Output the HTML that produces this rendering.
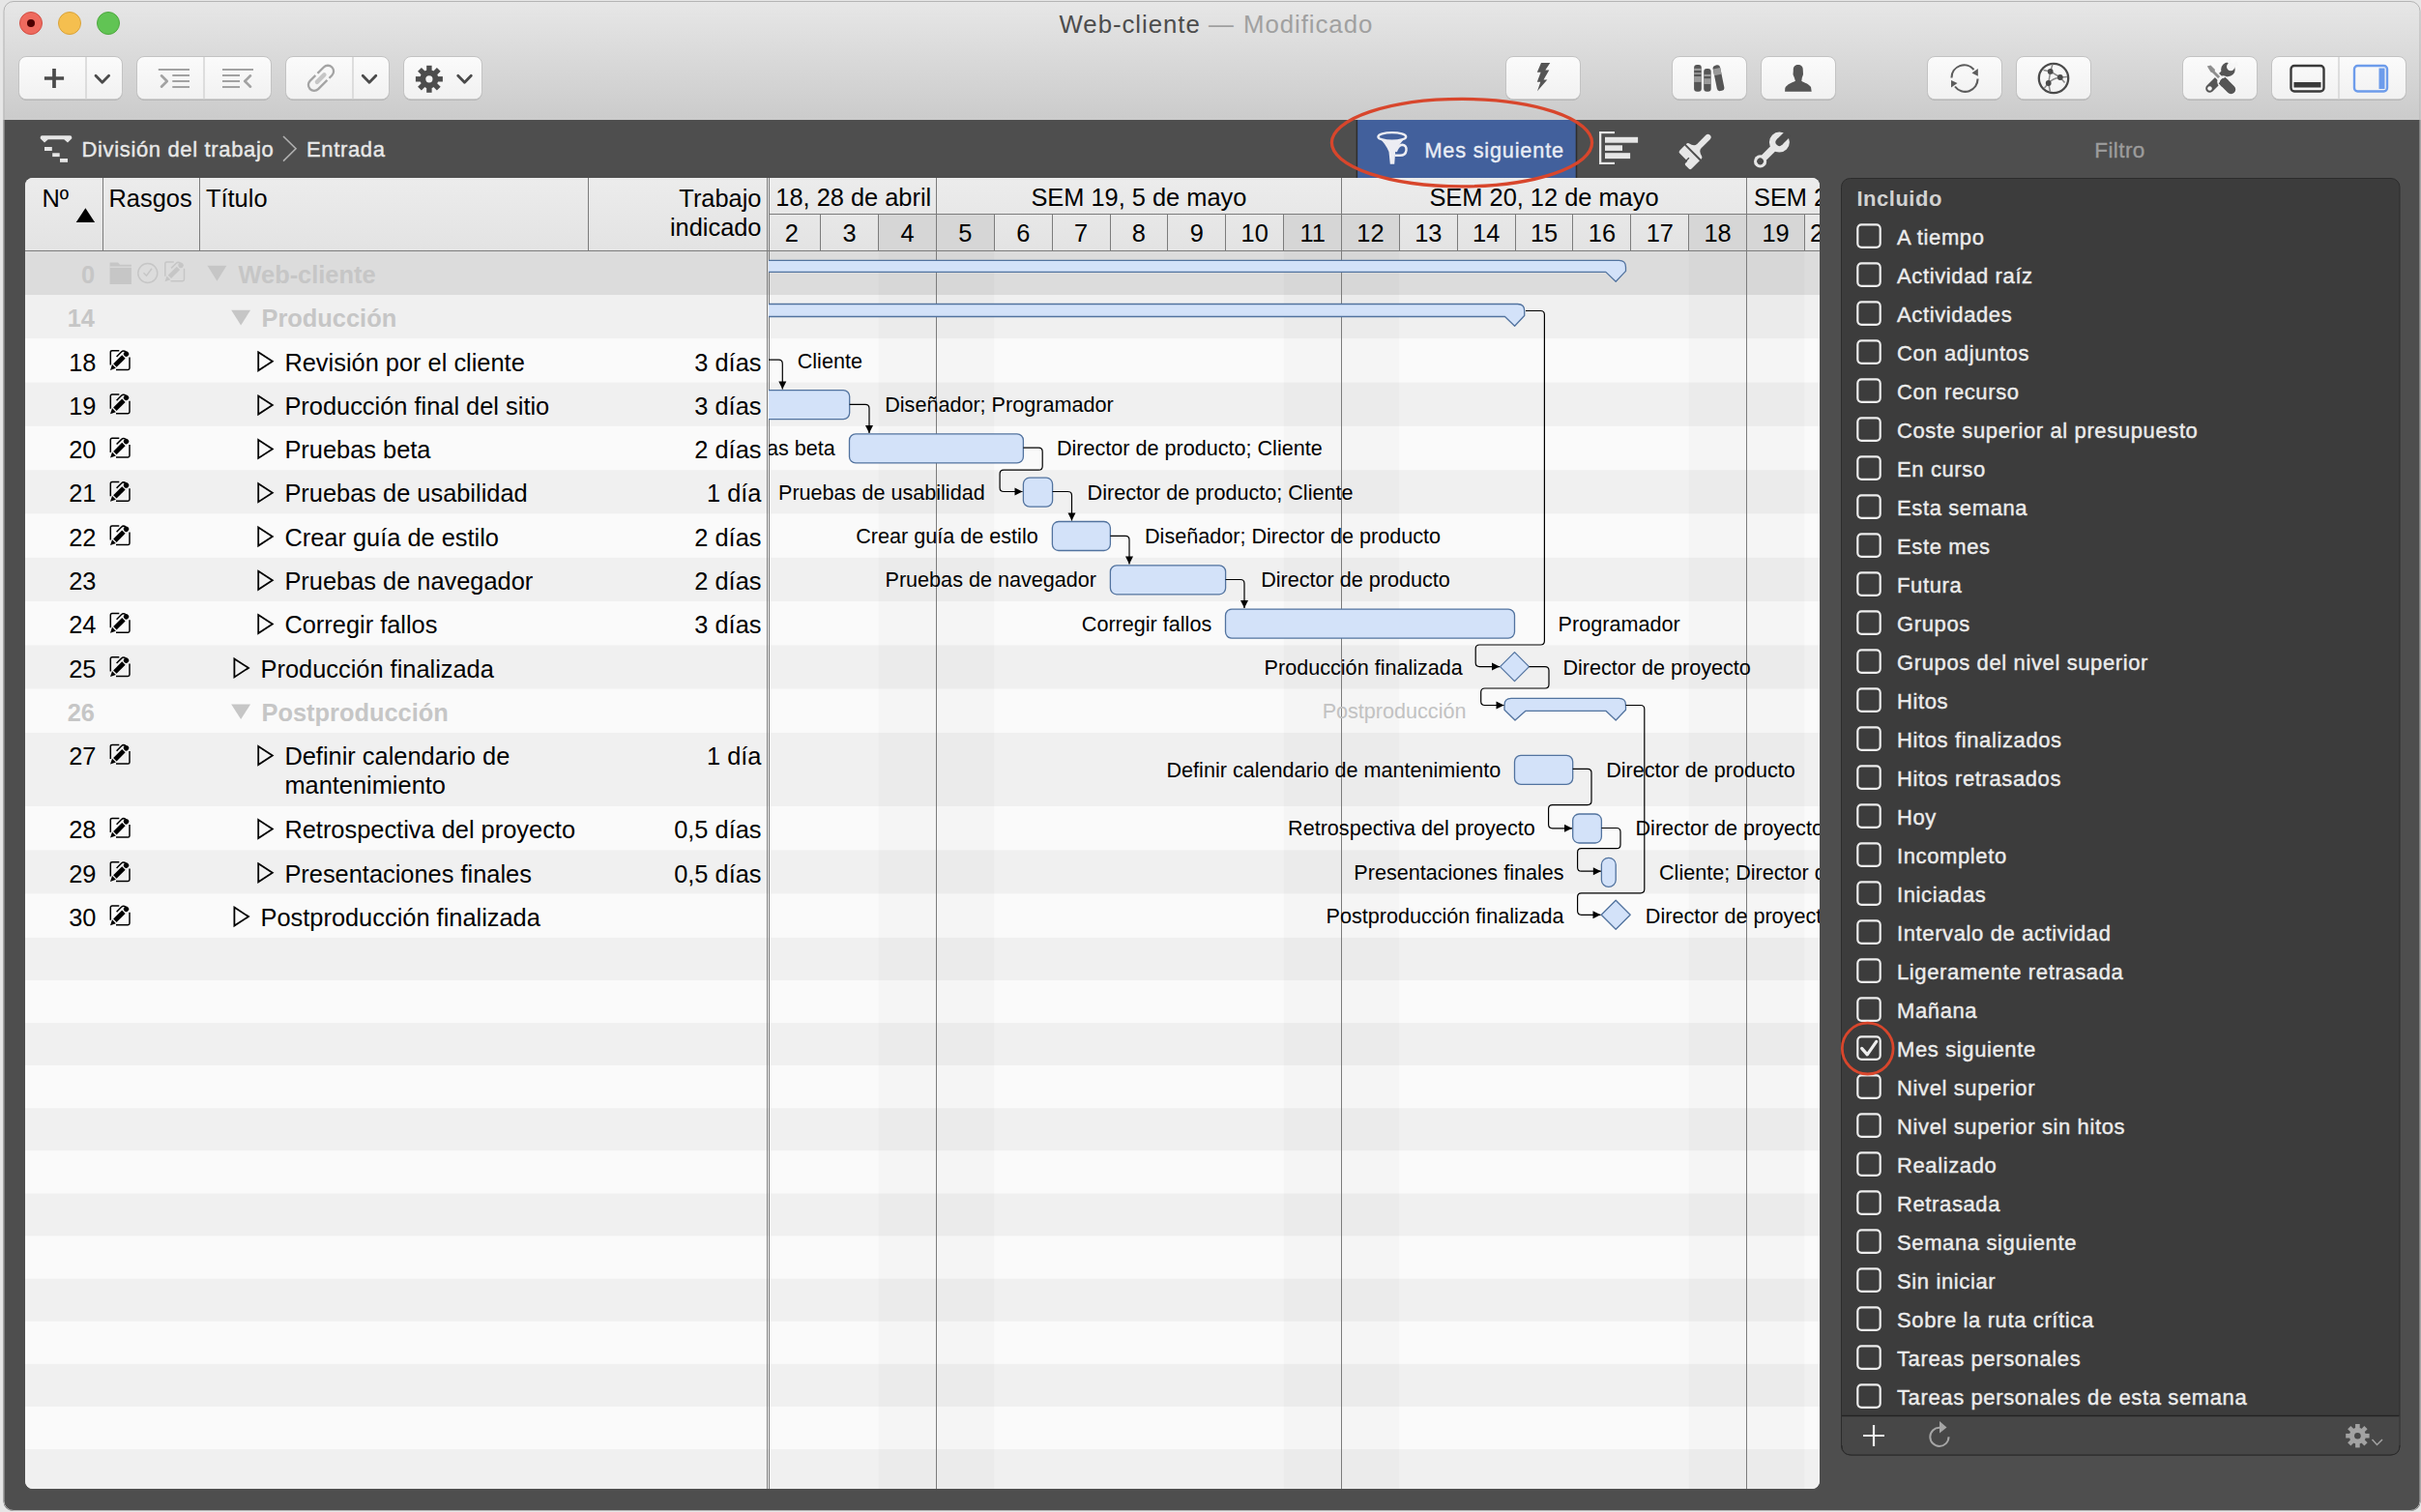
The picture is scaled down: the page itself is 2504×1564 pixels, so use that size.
<!DOCTYPE html>
<html><head><meta charset="utf-8"><title>Web-cliente</title>
<style>
html,body{margin:0;padding:0;background:#e6e6e6;}
body{width:2504px;height:1564px;overflow:hidden;}
svg{display:block;font-family:"Liberation Sans", sans-serif;}
</style></head><body>
<svg width="2504" height="1564" viewBox="0 0 2504 1564">
<defs><linearGradient id="tb" x1="0" y1="0" x2="0" y2="1"><stop offset="0" stop-color="#e7e7e7"/><stop offset="1" stop-color="#cbcbcb"/></linearGradient><linearGradient id="btn" x1="0" y1="0" x2="0" y2="1"><stop offset="0" stop-color="#fbfbfb"/><stop offset="1" stop-color="#f1f1f1"/></linearGradient><linearGradient id="hdr" x1="0" y1="0" x2="0" y2="1"><stop offset="0" stop-color="#ececec"/><stop offset="1" stop-color="#e3e3e3"/></linearGradient><clipPath id="win"><rect x="3.5" y="1" width="2500" height="1562" rx="10" ry="10"/></clipPath><clipPath id="tbl"><rect x="26" y="184" width="1856" height="1356" rx="8" ry="8"/></clipPath><clipPath id="gantt"><rect x="795" y="184" width="1087" height="1356"/></clipPath></defs>
<g clip-path="url(#win)">
<rect x="0.00" y="0.00" width="2504.00" height="124.00" fill="url(#tb)" />
<rect x="0.00" y="124.00" width="2504.00" height="1440.00" fill="#4e4e4e" />
</g>
<rect x="4" y="1.5" width="2499" height="1561" rx="10" ry="10" fill="none" stroke="#b4b4b4" stroke-width="1"/>
<circle cx="32" cy="24" r="11.5" fill="#ee6a5e" stroke="#d24e44" stroke-width="1"/>
<circle cx="72" cy="24" r="11.5" fill="#f5bf4f" stroke="#d9a33a" stroke-width="1"/>
<circle cx="112" cy="24" r="11.5" fill="#61c454" stroke="#4ea83f" stroke-width="1"/>
<circle cx="32" cy="24" r="4" fill="#4d0000"/>
<text x="1095.5" y="33.5" font-size="25.8" fill="#4d4d4d" font-weight="normal" text-anchor="start" letter-spacing="0.95">Web-cliente</text>
<text x="1250.0" y="33.5" font-size="25.8" fill="#a0a0a0" font-weight="normal" text-anchor="start" letter-spacing="0.95">—</text>
<text x="1286.0" y="33.5" font-size="25.8" fill="#a0a0a0" font-weight="normal" text-anchor="start" letter-spacing="0.95">Modificado</text>
<rect x="19.5" y="59.8" width="107.0" height="44" rx="7.5" ry="7.5" fill="#aaaaaa"/>
<rect x="19.5" y="58.5" width="107.0" height="44.3" rx="7.5" ry="7.5" fill="url(#btn)" stroke="#c3c3c3" stroke-width="1"/>
<line x1="89" y1="59" x2="89" y2="102.5" stroke="#d4d4d4" stroke-width="1.5"/>
<rect x="141.5" y="59.8" width="139.0" height="44" rx="7.5" ry="7.5" fill="#aaaaaa"/>
<rect x="141.5" y="58.5" width="139.0" height="44.3" rx="7.5" ry="7.5" fill="url(#btn)" stroke="#c3c3c3" stroke-width="1"/>
<line x1="211" y1="59" x2="211" y2="102.5" stroke="#d4d4d4" stroke-width="1.5"/>
<rect x="295.5" y="59.8" width="107.0" height="44" rx="7.5" ry="7.5" fill="#aaaaaa"/>
<rect x="295.5" y="58.5" width="107.0" height="44.3" rx="7.5" ry="7.5" fill="url(#btn)" stroke="#c3c3c3" stroke-width="1"/>
<line x1="365" y1="59" x2="365" y2="102.5" stroke="#d4d4d4" stroke-width="1.5"/>
<rect x="417.5" y="59.8" width="81.0" height="44" rx="7.5" ry="7.5" fill="#aaaaaa"/>
<rect x="417.5" y="58.5" width="81.0" height="44.3" rx="7.5" ry="7.5" fill="url(#btn)" stroke="#c3c3c3" stroke-width="1"/>
<rect x="1557.5" y="59.8" width="77.0" height="44" rx="7.5" ry="7.5" fill="#aaaaaa"/>
<rect x="1557.5" y="58.5" width="77.0" height="44.3" rx="7.5" ry="7.5" fill="url(#btn)" stroke="#c3c3c3" stroke-width="1"/>
<rect x="1729.5" y="59.8" width="77.0" height="44" rx="7.5" ry="7.5" fill="#aaaaaa"/>
<rect x="1729.5" y="58.5" width="77.0" height="44.3" rx="7.5" ry="7.5" fill="url(#btn)" stroke="#c3c3c3" stroke-width="1"/>
<rect x="1821.5" y="59.8" width="77.0" height="44" rx="7.5" ry="7.5" fill="#aaaaaa"/>
<rect x="1821.5" y="58.5" width="77.0" height="44.3" rx="7.5" ry="7.5" fill="url(#btn)" stroke="#c3c3c3" stroke-width="1"/>
<rect x="1993.5" y="59.8" width="77.0" height="44" rx="7.5" ry="7.5" fill="#aaaaaa"/>
<rect x="1993.5" y="58.5" width="77.0" height="44.3" rx="7.5" ry="7.5" fill="url(#btn)" stroke="#c3c3c3" stroke-width="1"/>
<rect x="2085.5" y="59.8" width="77.0" height="44" rx="7.5" ry="7.5" fill="#aaaaaa"/>
<rect x="2085.5" y="58.5" width="77.0" height="44.3" rx="7.5" ry="7.5" fill="url(#btn)" stroke="#c3c3c3" stroke-width="1"/>
<rect x="2257.5" y="59.8" width="77.0" height="44" rx="7.5" ry="7.5" fill="#aaaaaa"/>
<rect x="2257.5" y="58.5" width="77.0" height="44.3" rx="7.5" ry="7.5" fill="url(#btn)" stroke="#c3c3c3" stroke-width="1"/>
<rect x="2349.5" y="59.8" width="139.0" height="44" rx="7.5" ry="7.5" fill="#aaaaaa"/>
<rect x="2349.5" y="58.5" width="139.0" height="44.3" rx="7.5" ry="7.5" fill="url(#btn)" stroke="#c3c3c3" stroke-width="1"/>
<line x1="2419" y1="59" x2="2419" y2="102.5" stroke="#d4d4d4" stroke-width="1.5"/>
<g fill="none" stroke="#4a4a4a" stroke-width="3.7">
<path d="M45.9 81H66.1M56 71V91"/>
</g>
<path d="M99.0 78.2L105.8 85.2L112.6 78.2" fill="none" stroke="#4a4a4a" stroke-width="2.8" stroke-linecap="round" stroke-linejoin="round"/>
<path d="M375.2 78.2L382 85.2L388.8 78.2" fill="none" stroke="#4a4a4a" stroke-width="2.8" stroke-linecap="round" stroke-linejoin="round"/>
<path d="M473.7 78.2L480.5 85.2L487.3 78.2" fill="none" stroke="#4a4a4a" stroke-width="2.8" stroke-linecap="round" stroke-linejoin="round"/>
<g stroke="#a2a2a2" stroke-width="1.8" fill="none">
<path d="M163.8 72H196M178.3 78H196M178.3 84H196M178.3 90H196"/><path d="M167 78.3L172.8 84L167 89.7" stroke-width="2.6" stroke-linecap="round" stroke-linejoin="round"/>
<path d="M230 72H262M230 78H248M230 84H248M230 90H248"/><path d="M259 78.3L253.2 84L259 89.7" stroke-width="2.6" stroke-linecap="round" stroke-linejoin="round"/>
</g>
<g transform="translate(332 80.8) rotate(-45)"><rect x="-16" y="-6" width="32" height="12" rx="6" fill="none" stroke="#a3a3a3" stroke-width="2.3"/><rect x="-2" y="-8" width="3" height="4" fill="#f7f7f7"/><rect x="3" y="4" width="3" height="4" fill="#f5f5f5"/><rect x="-8" y="-2.2" width="15" height="4.4" rx="2.2" fill="#c6c6c6"/></g>
<rect x="441.20" y="67.80" width="5.40" height="28.00" fill="#4d4d4d" transform="rotate(0 443.9 81.8)"/>
<rect x="441.20" y="67.80" width="5.40" height="28.00" fill="#4d4d4d" transform="rotate(45 443.9 81.8)"/>
<rect x="441.20" y="67.80" width="5.40" height="28.00" fill="#4d4d4d" transform="rotate(90 443.9 81.8)"/>
<rect x="441.20" y="67.80" width="5.40" height="28.00" fill="#4d4d4d" transform="rotate(135 443.9 81.8)"/>
<circle cx="443.9" cy="81.8" r="9.6" fill="#4d4d4d"/>
<circle cx="443.9" cy="81.8" r="3.6" fill="#f6f6f6"/>
<path d="M1594 65L1603.3 65L1598.3 72.6L1602.3 72.6L1596.5 82.6L1600.3 82.6L1590 94.3L1593.3 84.8L1589.8 84.8L1593.6 74.8L1589.8 74.8Z" fill="#555"/>
<rect x="1752.1" y="67.1" width="7.7" height="27.6" rx="3" fill="#555"/>
<g fill="#9a9a9a"><rect x="1752.1" y="70.8" width="7.7" height="2.2"/><rect x="1752.1" y="75.1" width="7.7" height="1.8"/><rect x="1752.1" y="79" width="7.7" height="5.9"/></g>
<rect x="1762.2" y="71.1" width="7.5" height="23.6" rx="3" fill="#555"/>
<g fill="#9a9a9a"><rect x="1762.2" y="76.9" width="7.5" height="2.1"/><rect x="1762.2" y="81.2" width="7.5" height="5.8"/></g>
<g transform="rotate(-11.5 1777.5 80.7)"><rect x="1773.7" y="67.2" width="7.6" height="27" rx="3" fill="#555"/><rect x="1773.7" y="70.5" width="7.6" height="6.8" fill="#9a9a9a"/></g>
<path d="M1859.8 67C1863.5 67 1865 69.5 1864.8 73L1865 77L1863.8 80.6L1863.3 83.8C1866 85.5 1871 87 1873 90L1873.7 94.7H1846.1L1846.3 91C1848.5 87 1853.5 85.5 1856.9 83.8L1855.9 80.6L1854.5 77L1854.8 73C1854.6 69.5 1856 67 1859.8 67Z" fill="#555"/>
<g fill="none" stroke="#5c5c5c" stroke-width="2.1"><path d="M2018.5 80.5A13 13 0 0 1 2041.5 72"/><path d="M2045.5 81.5A13 13 0 0 1 2022 89.5"/></g>
<path d="M2039.5 75.5L2045.8 71L2045.8 78.8Z" fill="#5c5c5c"/><path d="M2024.5 86L2018 90.5L2018 83Z" fill="#5c5c5c"/>
<circle cx="2124" cy="81" r="15.2" fill="none" stroke="#4a4a4a" stroke-width="2.3"/>
<g stroke="#8a8a8a" stroke-width="1.5" fill="none"><path d="M2120.7 73.9L2130.8 80M2130.8 80Q2123 81 2118.7 86M2120.7 73.9L2118.7 86M2120.7 73.9L2113.5 72.5M2120.7 73.9L2123 66.5M2130.8 80L2138 79.5M2130.8 80L2135.5 85.5M2118.7 86L2120.5 95M2118.7 86L2114.5 91"/></g>
<g fill="#4a4a4a"><circle cx="2120.7" cy="73.9" r="2.9"/><circle cx="2130.8" cy="80" r="2.9"/><circle cx="2118.7" cy="86" r="2.9"/></g>
<g transform="translate(2296 81)"><path d="M4 -4L-10.5 10.5" stroke="#555" stroke-width="8.5" stroke-linecap="round"/><circle cx="-10.5" cy="10.5" r="2.3" fill="#f6f6f6"/><circle cx="8.4" cy="-9.1" r="7.3" fill="#555"/><circle cx="11.2" cy="-12" r="4.2" fill="#f6f6f6"/><path d="M11.2 -12L17 -18L19 -13L11.2 -12L6 -19L11 -20Z" fill="#f6f6f6"/><path d="M-9 -9L3 3" stroke="#f6f6f6" stroke-width="6"/><path d="M-9 -9L3 3" stroke="#8e8e8e" stroke-width="2.8"/><path d="M-13.2 -12.6L-9.5 -13.5L-5 -9L-6 -5.5L-9.5 -6.5Z" fill="#8e8e8e"/><path d="M3.5 3.5L11.5 11.5" stroke="#f6f6f6" stroke-width="12.5" stroke-linecap="round"/><path d="M4.5 4.5L11.5 11.5" stroke="#555" stroke-width="9.5" stroke-linecap="round"/><path d="M2 2L5.5 5.5" stroke="#555" stroke-width="9.5"/></g>
<rect x="2369.5" y="68" width="34" height="26.5" rx="3.5" fill="none" stroke="#3a3a3a" stroke-width="2.4"/>
<rect x="2372.5" y="85" width="28" height="5.5" fill="#3a3a3a"/>
<rect x="2435" y="68" width="34" height="26.5" rx="3.5" fill="none" stroke="#6d9ceb" stroke-width="2.4"/>
<rect x="2460.5" y="70.5" width="6" height="21.5" fill="#6d9ceb"/>
<g fill="#e6e6e6"><path d="M43.5 140.3H72.5Q74.3 140.3 74.3 142V143.3L70 147.6L66.2 144.3H49.8L46 147.6L41.7 143.3V142Q41.7 140.3 43.5 140.3Z"/><rect x="46" y="152" width="7.8" height="4"/><rect x="54.2" y="158.3" width="7.5" height="3.8"/><rect x="62" y="164" width="8" height="3.8"/></g>
<text x="84.5" y="162.0" font-size="22" fill="#e8e8e8" font-weight="normal" text-anchor="start" letter-spacing="0.65" stroke="#e8e8e8" stroke-width="0.4">División del trabajo</text>
<path d="M293 141L306 153.8L293 166.6" fill="none" stroke="#b0b0b0" stroke-width="1.6"/>
<text x="317.0" y="162.0" font-size="22" fill="#e8e8e8" font-weight="normal" text-anchor="start" letter-spacing="0.65" stroke="#e8e8e8" stroke-width="0.4">Entrada</text>
<rect x="1403.40" y="124.00" width="226.50" height="60.00" fill="#42609c" />
<line x1="1403.4" y1="124" x2="1403.4" y2="184" stroke="#2e2e2e" stroke-width="1.5"/><line x1="1630.5" y1="124" x2="1630.5" y2="184" stroke="#2e2e2e" stroke-width="1.5"/>
<path d="M1425.4 141.4Q1433.5 149 1436.5 157L1437.8 169.8H1442.2L1443.2 157Q1446 150.5 1454.2 141.4A14.4 4.3 0 0 1 1425.4 141.4Z" fill="#ecedf3"/>
<g fill="none" stroke="#ecedf3" stroke-width="2.4"><ellipse cx="1439.8" cy="141.4" rx="14.4" ry="4.3"/><path d="M1443.8 157Q1446 150 1450.5 149.8Q1455 150.5 1454.5 155.5Q1453.8 160.8 1448 160.8H1442.8"/></g>
<text x="1473.4" y="162.7" font-size="21.7" fill="#e9edf5" font-weight="normal" text-anchor="start" letter-spacing="0.82" stroke="#e9edf5" stroke-width="0.4">Mes siguiente</text>
<g fill="#e6e6e6"><rect x="1654" y="136" width="2.3" height="34"/><rect x="1654" y="136" width="16" height="2.2"/><rect x="1654" y="167.8" width="16" height="2.2"/><rect x="1660" y="141.8" width="34.1" height="5.9"/><rect x="1660" y="150.3" width="18" height="5.6"/><rect x="1660" y="158.2" width="26.1" height="5.9"/></g>
<g transform="translate(1751 157.5) rotate(45)" fill="#e6e6e6"><rect x="-3.1" y="-25" width="6.2" height="18" rx="3.1"/><path d="M-3.1 -9Q-3.1 -5 -9.5 -3.5Q-11 -3 -11 -1.5V-0.8H11V-1.5Q11 -3 9.5 -3.5Q3.1 -5 3.1 -9Z"/><path d="M-11 1.2H11V13Q11 15 9 15H4Q2.5 15 2.5 13.5V10.5H-9Q-11 10.5 -11 8.5Z"/><path d="M1.2 7V15" stroke="#4c4c4c" stroke-width="1.3"/></g>
<g transform="translate(1830.5 157) rotate(45)"><rect x="-3.6" y="-8" width="7.2" height="20" fill="#e6e6e6"/><circle cx="0" cy="14" r="6.6" fill="#e6e6e6"/><circle cx="0" cy="14" r="3.4" fill="#4c4c4c"/><circle cx="0" cy="-14" r="10.5" fill="#e6e6e6"/><rect x="-3.9" y="-27" width="7.8" height="13" fill="#4c4c4c"/><circle cx="0" cy="-14" r="3.9" fill="#4c4c4c"/></g>
<text x="2192.5" y="163.3" font-size="22.5" fill="#9c9c9c" font-weight="normal" text-anchor="middle" letter-spacing="0.4" stroke="#9c9c9c" stroke-width="0.35">Filtro</text>
<g clip-path="url(#tbl)">
<rect x="26.00" y="184.00" width="1856.00" height="1356.00" fill="#fafafa" />
<rect x="26.00" y="184.00" width="1856.00" height="75.50" fill="url(#hdr)" />
<rect x="26.00" y="259.70" width="1856.00" height="45.30" fill="#dcdcdc" />
<rect x="26.00" y="305.00" width="1856.00" height="45.30" fill="#f0f0f0" />
<rect x="26.00" y="350.30" width="1856.00" height="45.30" fill="#fafafa" />
<rect x="26.00" y="395.60" width="1856.00" height="45.30" fill="#f0f0f0" />
<rect x="26.00" y="440.90" width="1856.00" height="45.30" fill="#fafafa" />
<rect x="26.00" y="486.20" width="1856.00" height="45.30" fill="#f0f0f0" />
<rect x="26.00" y="531.50" width="1856.00" height="45.30" fill="#fafafa" />
<rect x="26.00" y="576.80" width="1856.00" height="45.30" fill="#f0f0f0" />
<rect x="26.00" y="622.10" width="1856.00" height="45.30" fill="#fafafa" />
<rect x="26.00" y="667.40" width="1856.00" height="45.30" fill="#f0f0f0" />
<rect x="26.00" y="712.70" width="1856.00" height="45.30" fill="#fafafa" />
<rect x="26.00" y="758.00" width="1856.00" height="76.00" fill="#f0f0f0" />
<rect x="26.00" y="834.00" width="1856.00" height="45.30" fill="#fafafa" />
<rect x="26.00" y="879.30" width="1856.00" height="45.30" fill="#f0f0f0" />
<rect x="26.00" y="924.60" width="1856.00" height="45.30" fill="#fafafa" />
<rect x="26.00" y="969.90" width="1856.00" height="44.10" fill="#f0f0f0" />
<rect x="26.00" y="1014.00" width="1856.00" height="44.10" fill="#fafafa" />
<rect x="26.00" y="1058.10" width="1856.00" height="44.10" fill="#f0f0f0" />
<rect x="26.00" y="1102.20" width="1856.00" height="44.10" fill="#fafafa" />
<rect x="26.00" y="1146.30" width="1856.00" height="44.10" fill="#f0f0f0" />
<rect x="26.00" y="1190.40" width="1856.00" height="44.10" fill="#fafafa" />
<rect x="26.00" y="1234.50" width="1856.00" height="44.10" fill="#f0f0f0" />
<rect x="26.00" y="1278.60" width="1856.00" height="44.10" fill="#fafafa" />
<rect x="26.00" y="1322.70" width="1856.00" height="44.10" fill="#f0f0f0" />
<rect x="26.00" y="1366.80" width="1856.00" height="44.10" fill="#fafafa" />
<rect x="26.00" y="1410.90" width="1856.00" height="44.10" fill="#f0f0f0" />
<rect x="26.00" y="1455.00" width="1856.00" height="44.10" fill="#fafafa" />
<rect x="26.00" y="1499.10" width="1856.00" height="44.10" fill="#f0f0f0" />
<rect x="908.53" y="259.00" width="119.74" height="1281.00" fill="rgba(0,0,0,0.02)" />
<rect x="1327.62" y="259.00" width="119.74" height="1281.00" fill="rgba(0,0,0,0.02)" />
<rect x="1746.71" y="259.00" width="119.74" height="1281.00" fill="rgba(0,0,0,0.02)" />
<rect x="908.53" y="221.50" width="119.74" height="37.50" fill="#d6d6d6" />
<rect x="1327.62" y="221.50" width="119.74" height="37.50" fill="#d6d6d6" />
<rect x="1746.71" y="221.50" width="119.74" height="37.50" fill="#d6d6d6" />
<g stroke="#7c7c7c" stroke-width="1">
<path d="M26 259.5H1882"/>
<path d="M106.5 184V259M206.5 184V259M608.5 184V259M793.5 184V1540M795.5 184V1540"/>
<path d="M795 221.5H1882"/>
<path d="M848.5 221.5V259"/>
<path d="M908.5 221.5V259"/>
<path d="M968.5 184V1540"/>
<path d="M1028.5 221.5V259"/>
<path d="M1088.5 221.5V259"/>
<path d="M1148.5 221.5V259"/>
<path d="M1207.5 221.5V259"/>
<path d="M1267.5 221.5V259"/>
<path d="M1327.5 221.5V259"/>
<path d="M1387.5 184V1540"/>
<path d="M1447.5 221.5V259"/>
<path d="M1507.5 221.5V259"/>
<path d="M1567.5 221.5V259"/>
<path d="M1626.5 221.5V259"/>
<path d="M1686.5 221.5V259"/>
<path d="M1746.5 221.5V259"/>
<path d="M1806.5 184V1540"/>
<path d="M1866.5 221.5V259"/>
</g>
<text x="43.4" y="214.0" font-size="25.4" fill="#000" font-weight="normal" text-anchor="start" >Nº</text>
<path d="M78.7 230.1L88.4 215.3L98.1 230.1Z" fill="#000"/>
<text x="112.5" y="214.0" font-size="25.4" fill="#000" font-weight="normal" text-anchor="start" >Rasgos</text>
<text x="213.0" y="214.0" font-size="25.4" fill="#000" font-weight="normal" text-anchor="start" >Título</text>
<text x="787.5" y="214.0" font-size="25.4" fill="#000" font-weight="normal" text-anchor="end" >Trabajo</text>
<text x="787.5" y="244.2" font-size="25.4" fill="#000" font-weight="normal" text-anchor="end" >indicado</text>
<text x="802.3" y="212.9" font-size="25.4" fill="#000" font-weight="normal" text-anchor="start" >18, 28 de abril</text>
<text x="1177.9" y="212.9" font-size="25.4" fill="#000" font-weight="normal" text-anchor="middle" >SEM 19, 5 de mayo</text>
<text x="1597.0" y="212.9" font-size="25.4" fill="#000" font-weight="normal" text-anchor="middle" >SEM 20, 12 de mayo</text>
<text x="1814.0" y="212.9" font-size="25.4" fill="#000" font-weight="normal" text-anchor="start" >SEM 21, 19 de mayo</text>
<text x="818.7" y="249.8" font-size="25.4" fill="#000" font-weight="normal" text-anchor="middle" >2</text>
<text x="878.6" y="249.8" font-size="25.4" fill="#000" font-weight="normal" text-anchor="middle" >3</text>
<text x="938.5" y="249.8" font-size="25.4" fill="#000" font-weight="normal" text-anchor="middle" >4</text>
<text x="998.3" y="249.8" font-size="25.4" fill="#000" font-weight="normal" text-anchor="middle" >5</text>
<text x="1058.2" y="249.8" font-size="25.4" fill="#000" font-weight="normal" text-anchor="middle" >6</text>
<text x="1118.1" y="249.8" font-size="25.4" fill="#000" font-weight="normal" text-anchor="middle" >7</text>
<text x="1177.9" y="249.8" font-size="25.4" fill="#000" font-weight="normal" text-anchor="middle" >8</text>
<text x="1237.8" y="249.8" font-size="25.4" fill="#000" font-weight="normal" text-anchor="middle" >9</text>
<text x="1297.7" y="249.8" font-size="25.4" fill="#000" font-weight="normal" text-anchor="middle" >10</text>
<text x="1357.6" y="249.8" font-size="25.4" fill="#000" font-weight="normal" text-anchor="middle" >11</text>
<text x="1417.4" y="249.8" font-size="25.4" fill="#000" font-weight="normal" text-anchor="middle" >12</text>
<text x="1477.3" y="249.8" font-size="25.4" fill="#000" font-weight="normal" text-anchor="middle" >13</text>
<text x="1537.2" y="249.8" font-size="25.4" fill="#000" font-weight="normal" text-anchor="middle" >14</text>
<text x="1597.0" y="249.8" font-size="25.4" fill="#000" font-weight="normal" text-anchor="middle" >15</text>
<text x="1656.9" y="249.8" font-size="25.4" fill="#000" font-weight="normal" text-anchor="middle" >16</text>
<text x="1716.8" y="249.8" font-size="25.4" fill="#000" font-weight="normal" text-anchor="middle" >17</text>
<text x="1776.6" y="249.8" font-size="25.4" fill="#000" font-weight="normal" text-anchor="middle" >18</text>
<text x="1836.5" y="249.8" font-size="25.4" fill="#000" font-weight="normal" text-anchor="middle" >19</text>
<text x="1872.0" y="249.8" font-size="25.4" fill="#000" font-weight="normal" text-anchor="start" >20</text>
<text x="98.0" y="292.9" font-size="25.4" fill="#c6c6c6" font-weight="bold" text-anchor="end" >0</text>
<g fill="#c6c6c6"><path d="M113.6 271.4H122L124 273.7H135.9V294.0H113.6Z"/></g>
<path d="M113.6 276.2H135.9" stroke="#dcdcdc" stroke-width="1.2"/>
<circle cx="152.8" cy="282.5" r="10" fill="none" stroke="#c6c6c6" stroke-width="1.5"/>
<path d="M148.5 282.2L151.5 285.2L157 277.7" fill="none" stroke="#c6c6c6" stroke-width="1.5"/>
<g transform="translate(170 270.3)"><path d="M0.8 15.5V2.5Q0.8 0.8 2.5 0.8H9.8M20.5 7.5V18.8Q20.5 20.5 18.8 20.5H6.5" fill="none" stroke="#c6c6c6" stroke-width="1.5"/><g transform="translate(0.5 21) rotate(-45)"><path d="M0 0L5.6 -2.7V2.7Z" fill="#c6c6c6"/><rect x="6.9" y="-2.4" width="12.8" height="4.8" fill="#c6c6c6"/><circle cx="23.6" cy="-0.2" r="2.7" fill="#c6c6c6"/><path d="M14.5 -5.2H21.5Q24.5 -5.2 24.8 -2" fill="none" stroke="#c6c6c6" stroke-width="1.5"/></g></g>
<path d="M214.5 274.7H234.4L224.45 290.7Z" fill="#c6c6c6"/>
<text x="246.5" y="292.9" font-size="25.4" fill="#c6c6c6" font-weight="bold" text-anchor="start" >Web-cliente</text>
<text x="98.0" y="338.2" font-size="25.4" fill="#c6c6c6" font-weight="bold" text-anchor="end" >14</text>
<path d="M239.2 320.8H259.1L249.15 336.4Z" fill="#c6c6c6"/>
<text x="270.5" y="338.2" font-size="25.4" fill="#c6c6c6" font-weight="bold" text-anchor="start" >Producción</text>
<text x="99.5" y="383.5" font-size="25.4" fill="#000" font-weight="normal" text-anchor="end" >18</text>
<g transform="translate(113.5 361.90000000000003)"><path d="M0.8 15.5V2.5Q0.8 0.8 2.5 0.8H9.8M20.5 7.5V18.8Q20.5 20.5 18.8 20.5H6.5" fill="none" stroke="#000" stroke-width="1.5"/><g transform="translate(0.5 21) rotate(-45)"><path d="M0 0L5.6 -2.7V2.7Z" fill="#000"/><rect x="6.9" y="-2.4" width="12.8" height="4.8" fill="#000"/><circle cx="23.6" cy="-0.2" r="2.7" fill="#000"/><path d="M14.5 -5.2H21.5Q24.5 -5.2 24.8 -2" fill="none" stroke="#000" stroke-width="1.5"/></g></g>
<path d="M267.2 364.3L281.8 373.8L267.2 383.3Z" fill="none" stroke="#000" stroke-width="1.8" stroke-linejoin="miter"/>
<text x="294.4" y="383.5" font-size="25.4" fill="#000" font-weight="normal" text-anchor="start" >Revisión por el cliente</text>
<text x="787.5" y="383.5" font-size="25.4" fill="#000" font-weight="normal" text-anchor="end" >3 días</text>
<text x="99.5" y="428.8" font-size="25.4" fill="#000" font-weight="normal" text-anchor="end" >19</text>
<g transform="translate(113.5 407.20000000000005)"><path d="M0.8 15.5V2.5Q0.8 0.8 2.5 0.8H9.8M20.5 7.5V18.8Q20.5 20.5 18.8 20.5H6.5" fill="none" stroke="#000" stroke-width="1.5"/><g transform="translate(0.5 21) rotate(-45)"><path d="M0 0L5.6 -2.7V2.7Z" fill="#000"/><rect x="6.9" y="-2.4" width="12.8" height="4.8" fill="#000"/><circle cx="23.6" cy="-0.2" r="2.7" fill="#000"/><path d="M14.5 -5.2H21.5Q24.5 -5.2 24.8 -2" fill="none" stroke="#000" stroke-width="1.5"/></g></g>
<path d="M267.2 409.6L281.8 419.1L267.2 428.6Z" fill="none" stroke="#000" stroke-width="1.8" stroke-linejoin="miter"/>
<text x="294.4" y="428.8" font-size="25.4" fill="#000" font-weight="normal" text-anchor="start" >Producción final del sitio</text>
<text x="787.5" y="428.8" font-size="25.4" fill="#000" font-weight="normal" text-anchor="end" >3 días</text>
<text x="99.5" y="474.1" font-size="25.4" fill="#000" font-weight="normal" text-anchor="end" >20</text>
<g transform="translate(113.5 452.50000000000006)"><path d="M0.8 15.5V2.5Q0.8 0.8 2.5 0.8H9.8M20.5 7.5V18.8Q20.5 20.5 18.8 20.5H6.5" fill="none" stroke="#000" stroke-width="1.5"/><g transform="translate(0.5 21) rotate(-45)"><path d="M0 0L5.6 -2.7V2.7Z" fill="#000"/><rect x="6.9" y="-2.4" width="12.8" height="4.8" fill="#000"/><circle cx="23.6" cy="-0.2" r="2.7" fill="#000"/><path d="M14.5 -5.2H21.5Q24.5 -5.2 24.8 -2" fill="none" stroke="#000" stroke-width="1.5"/></g></g>
<path d="M267.2 454.90000000000003L281.8 464.40000000000003L267.2 473.90000000000003Z" fill="none" stroke="#000" stroke-width="1.8" stroke-linejoin="miter"/>
<text x="294.4" y="474.1" font-size="25.4" fill="#000" font-weight="normal" text-anchor="start" >Pruebas beta</text>
<text x="787.5" y="474.1" font-size="25.4" fill="#000" font-weight="normal" text-anchor="end" >2 días</text>
<text x="99.5" y="519.4" font-size="25.4" fill="#000" font-weight="normal" text-anchor="end" >21</text>
<g transform="translate(113.5 497.80000000000007)"><path d="M0.8 15.5V2.5Q0.8 0.8 2.5 0.8H9.8M20.5 7.5V18.8Q20.5 20.5 18.8 20.5H6.5" fill="none" stroke="#000" stroke-width="1.5"/><g transform="translate(0.5 21) rotate(-45)"><path d="M0 0L5.6 -2.7V2.7Z" fill="#000"/><rect x="6.9" y="-2.4" width="12.8" height="4.8" fill="#000"/><circle cx="23.6" cy="-0.2" r="2.7" fill="#000"/><path d="M14.5 -5.2H21.5Q24.5 -5.2 24.8 -2" fill="none" stroke="#000" stroke-width="1.5"/></g></g>
<path d="M267.2 500.20000000000005L281.8 509.70000000000005L267.2 519.2Z" fill="none" stroke="#000" stroke-width="1.8" stroke-linejoin="miter"/>
<text x="294.4" y="519.4" font-size="25.4" fill="#000" font-weight="normal" text-anchor="start" >Pruebas de usabilidad</text>
<text x="787.5" y="519.4" font-size="25.4" fill="#000" font-weight="normal" text-anchor="end" >1 día</text>
<text x="99.5" y="564.7" font-size="25.4" fill="#000" font-weight="normal" text-anchor="end" >22</text>
<g transform="translate(113.5 543.1)"><path d="M0.8 15.5V2.5Q0.8 0.8 2.5 0.8H9.8M20.5 7.5V18.8Q20.5 20.5 18.8 20.5H6.5" fill="none" stroke="#000" stroke-width="1.5"/><g transform="translate(0.5 21) rotate(-45)"><path d="M0 0L5.6 -2.7V2.7Z" fill="#000"/><rect x="6.9" y="-2.4" width="12.8" height="4.8" fill="#000"/><circle cx="23.6" cy="-0.2" r="2.7" fill="#000"/><path d="M14.5 -5.2H21.5Q24.5 -5.2 24.8 -2" fill="none" stroke="#000" stroke-width="1.5"/></g></g>
<path d="M267.2 545.5L281.8 555.0L267.2 564.5Z" fill="none" stroke="#000" stroke-width="1.8" stroke-linejoin="miter"/>
<text x="294.4" y="564.7" font-size="25.4" fill="#000" font-weight="normal" text-anchor="start" >Crear guía de estilo</text>
<text x="787.5" y="564.7" font-size="25.4" fill="#000" font-weight="normal" text-anchor="end" >2 días</text>
<text x="99.5" y="610.0" font-size="25.4" fill="#000" font-weight="normal" text-anchor="end" >23</text>
<path d="M267.2 590.8L281.8 600.3L267.2 609.8Z" fill="none" stroke="#000" stroke-width="1.8" stroke-linejoin="miter"/>
<text x="294.4" y="610.0" font-size="25.4" fill="#000" font-weight="normal" text-anchor="start" >Pruebas de navegador</text>
<text x="787.5" y="610.0" font-size="25.4" fill="#000" font-weight="normal" text-anchor="end" >2 días</text>
<text x="99.5" y="655.3" font-size="25.4" fill="#000" font-weight="normal" text-anchor="end" >24</text>
<g transform="translate(113.5 633.6999999999999)"><path d="M0.8 15.5V2.5Q0.8 0.8 2.5 0.8H9.8M20.5 7.5V18.8Q20.5 20.5 18.8 20.5H6.5" fill="none" stroke="#000" stroke-width="1.5"/><g transform="translate(0.5 21) rotate(-45)"><path d="M0 0L5.6 -2.7V2.7Z" fill="#000"/><rect x="6.9" y="-2.4" width="12.8" height="4.8" fill="#000"/><circle cx="23.6" cy="-0.2" r="2.7" fill="#000"/><path d="M14.5 -5.2H21.5Q24.5 -5.2 24.8 -2" fill="none" stroke="#000" stroke-width="1.5"/></g></g>
<path d="M267.2 636.0999999999999L281.8 645.5999999999999L267.2 655.0999999999999Z" fill="none" stroke="#000" stroke-width="1.8" stroke-linejoin="miter"/>
<text x="294.4" y="655.3" font-size="25.4" fill="#000" font-weight="normal" text-anchor="start" >Corregir fallos</text>
<text x="787.5" y="655.3" font-size="25.4" fill="#000" font-weight="normal" text-anchor="end" >3 días</text>
<text x="99.5" y="700.6" font-size="25.4" fill="#000" font-weight="normal" text-anchor="end" >25</text>
<g transform="translate(113.5 678.9999999999999)"><path d="M0.8 15.5V2.5Q0.8 0.8 2.5 0.8H9.8M20.5 7.5V18.8Q20.5 20.5 18.8 20.5H6.5" fill="none" stroke="#000" stroke-width="1.5"/><g transform="translate(0.5 21) rotate(-45)"><path d="M0 0L5.6 -2.7V2.7Z" fill="#000"/><rect x="6.9" y="-2.4" width="12.8" height="4.8" fill="#000"/><circle cx="23.6" cy="-0.2" r="2.7" fill="#000"/><path d="M14.5 -5.2H21.5Q24.5 -5.2 24.8 -2" fill="none" stroke="#000" stroke-width="1.5"/></g></g>
<path d="M242.4 681.3999999999999L257.0 690.8999999999999L242.4 700.3999999999999Z" fill="none" stroke="#000" stroke-width="1.8" stroke-linejoin="miter"/>
<text x="269.5" y="700.6" font-size="25.4" fill="#000" font-weight="normal" text-anchor="start" >Producción finalizada</text>
<text x="98.0" y="745.9" font-size="25.4" fill="#c6c6c6" font-weight="bold" text-anchor="end" >26</text>
<path d="M239.2 728.4999999999998H259.1L249.15 744.0999999999998Z" fill="#c6c6c6"/>
<text x="270.5" y="745.9" font-size="25.4" fill="#c6c6c6" font-weight="bold" text-anchor="start" >Postproducción</text>
<text x="99.5" y="791.2" font-size="25.4" fill="#000" font-weight="normal" text-anchor="end" >27</text>
<g transform="translate(113.5 769.5999999999998)"><path d="M0.8 15.5V2.5Q0.8 0.8 2.5 0.8H9.8M20.5 7.5V18.8Q20.5 20.5 18.8 20.5H6.5" fill="none" stroke="#000" stroke-width="1.5"/><g transform="translate(0.5 21) rotate(-45)"><path d="M0 0L5.6 -2.7V2.7Z" fill="#000"/><rect x="6.9" y="-2.4" width="12.8" height="4.8" fill="#000"/><circle cx="23.6" cy="-0.2" r="2.7" fill="#000"/><path d="M14.5 -5.2H21.5Q24.5 -5.2 24.8 -2" fill="none" stroke="#000" stroke-width="1.5"/></g></g>
<path d="M267.2 771.9999999999998L281.8 781.4999999999998L267.2 790.9999999999998Z" fill="none" stroke="#000" stroke-width="1.8" stroke-linejoin="miter"/>
<text x="294.4" y="791.2" font-size="25.4" fill="#000" font-weight="normal" text-anchor="start" >Definir calendario de</text>
<text x="294.4" y="820.9" font-size="25.4" fill="#000" font-weight="normal" text-anchor="start" >mantenimiento</text>
<text x="787.5" y="791.2" font-size="25.4" fill="#000" font-weight="normal" text-anchor="end" >1 día</text>
<text x="99.5" y="867.2" font-size="25.4" fill="#000" font-weight="normal" text-anchor="end" >28</text>
<g transform="translate(113.5 845.5999999999998)"><path d="M0.8 15.5V2.5Q0.8 0.8 2.5 0.8H9.8M20.5 7.5V18.8Q20.5 20.5 18.8 20.5H6.5" fill="none" stroke="#000" stroke-width="1.5"/><g transform="translate(0.5 21) rotate(-45)"><path d="M0 0L5.6 -2.7V2.7Z" fill="#000"/><rect x="6.9" y="-2.4" width="12.8" height="4.8" fill="#000"/><circle cx="23.6" cy="-0.2" r="2.7" fill="#000"/><path d="M14.5 -5.2H21.5Q24.5 -5.2 24.8 -2" fill="none" stroke="#000" stroke-width="1.5"/></g></g>
<path d="M267.2 847.9999999999998L281.8 857.4999999999998L267.2 866.9999999999998Z" fill="none" stroke="#000" stroke-width="1.8" stroke-linejoin="miter"/>
<text x="294.4" y="867.2" font-size="25.4" fill="#000" font-weight="normal" text-anchor="start" >Retrospectiva del proyecto</text>
<text x="787.5" y="867.2" font-size="25.4" fill="#000" font-weight="normal" text-anchor="end" >0,5 días</text>
<text x="99.5" y="912.5" font-size="25.4" fill="#000" font-weight="normal" text-anchor="end" >29</text>
<g transform="translate(113.5 890.8999999999997)"><path d="M0.8 15.5V2.5Q0.8 0.8 2.5 0.8H9.8M20.5 7.5V18.8Q20.5 20.5 18.8 20.5H6.5" fill="none" stroke="#000" stroke-width="1.5"/><g transform="translate(0.5 21) rotate(-45)"><path d="M0 0L5.6 -2.7V2.7Z" fill="#000"/><rect x="6.9" y="-2.4" width="12.8" height="4.8" fill="#000"/><circle cx="23.6" cy="-0.2" r="2.7" fill="#000"/><path d="M14.5 -5.2H21.5Q24.5 -5.2 24.8 -2" fill="none" stroke="#000" stroke-width="1.5"/></g></g>
<path d="M267.2 893.2999999999997L281.8 902.7999999999997L267.2 912.2999999999997Z" fill="none" stroke="#000" stroke-width="1.8" stroke-linejoin="miter"/>
<text x="294.4" y="912.5" font-size="25.4" fill="#000" font-weight="normal" text-anchor="start" >Presentaciones finales</text>
<text x="787.5" y="912.5" font-size="25.4" fill="#000" font-weight="normal" text-anchor="end" >0,5 días</text>
<text x="99.5" y="957.8" font-size="25.4" fill="#000" font-weight="normal" text-anchor="end" >30</text>
<g transform="translate(113.5 936.1999999999997)"><path d="M0.8 15.5V2.5Q0.8 0.8 2.5 0.8H9.8M20.5 7.5V18.8Q20.5 20.5 18.8 20.5H6.5" fill="none" stroke="#000" stroke-width="1.5"/><g transform="translate(0.5 21) rotate(-45)"><path d="M0 0L5.6 -2.7V2.7Z" fill="#000"/><rect x="6.9" y="-2.4" width="12.8" height="4.8" fill="#000"/><circle cx="23.6" cy="-0.2" r="2.7" fill="#000"/><path d="M14.5 -5.2H21.5Q24.5 -5.2 24.8 -2" fill="none" stroke="#000" stroke-width="1.5"/></g></g>
<path d="M242.4 938.5999999999997L257.0 948.0999999999997L242.4 957.5999999999997Z" fill="none" stroke="#000" stroke-width="1.8" stroke-linejoin="miter"/>
<text x="269.5" y="957.8" font-size="25.4" fill="#000" font-weight="normal" text-anchor="start" >Postproducción finalizada</text>
</g>
<g clip-path="url(#gantt)">
<path d="M770 269.4H1674.5Q1681.5 269.4 1681.5 276.4V280.4L1671.2 291.3L1660.9 281.4H770Z" fill="#d3e2f9" stroke="#52739f" stroke-width="1.3" stroke-linejoin="round"/>
<path d="M770 314.5H1569.7Q1576.7 314.5 1576.7 321.5V326.5L1566.6 337.2L1556.4999999999998 327.5H770Z" fill="#d3e2f9" stroke="#52739f" stroke-width="1.3" stroke-linejoin="round"/>
<path d="M1563 722.4H1674.5Q1681.5 722.4 1681.5 729.4V734.3L1671.2 745L1660.9 735.3H1578L1567 745L1556 734.3V729.4Q1556 722.4 1563 722.4Z" fill="#d3e2f9" stroke="#52739f" stroke-width="1.3" stroke-linejoin="round"/>
<rect x="760.0" y="403.6" width="118.7" height="30" rx="6.5" ry="6.5" fill="#d3e2f9" stroke="#52739f" stroke-width="1.3"/>
<rect x="878.5" y="448.9" width="179.9" height="30" rx="6.5" ry="6.5" fill="#d3e2f9" stroke="#52739f" stroke-width="1.3"/>
<rect x="1058.4" y="494.2" width="30.2" height="30" rx="6.5" ry="6.5" fill="#d3e2f9" stroke="#52739f" stroke-width="1.3"/>
<rect x="1088.4" y="539.5" width="60.0" height="30" rx="6.5" ry="6.5" fill="#d3e2f9" stroke="#52739f" stroke-width="1.3"/>
<rect x="1148.4" y="584.8" width="119.2" height="30" rx="6.5" ry="6.5" fill="#d3e2f9" stroke="#52739f" stroke-width="1.3"/>
<rect x="1267.5" y="630.1" width="299.0" height="30" rx="6.5" ry="6.5" fill="#d3e2f9" stroke="#52739f" stroke-width="1.3"/>
<rect x="1566.5" y="781.4" width="60.2" height="30" rx="6.5" ry="6.5" fill="#d3e2f9" stroke="#52739f" stroke-width="1.3"/>
<rect x="1626.7" y="842.0" width="29.7" height="30" rx="6.5" ry="6.5" fill="#d3e2f9" stroke="#52739f" stroke-width="1.3"/>
<rect x="1656.4" y="887.3" width="14.8" height="30" rx="7.399999999999977" ry="7" fill="#d3e2f9" stroke="#52739f" stroke-width="1.3"/>
<path d="M1566.5 674.6L1581.5 689.6L1566.5 704.6L1551.5 689.6Z" fill="#d3e2f9" stroke="#52739f" stroke-width="1.3" stroke-linejoin="round"/>
<path d="M1671.2 931.3L1686.2 946.3L1671.2 961.3L1656.2 946.3Z" fill="#d3e2f9" stroke="#52739f" stroke-width="1.3" stroke-linejoin="round"/>
<path d="M790 372.2L805.3 372.2Q809.3 372.2 809.3 376.2L809.3 402.5" fill="none" stroke="#000" stroke-width="1.2"/>
<path d="M805.3 394.5H813.3L809.3 402.5Z" fill="#000"/>
<path d="M878.7 418.3L895.0 418.3Q899 418.3 899.0 422.3L899 448" fill="none" stroke="#000" stroke-width="1.2"/>
<path d="M895 440H903L899 448Z" fill="#000"/>
<path d="M1058.4 463.2L1074.2 463.2Q1078.2 463.2 1078.2 467.2L1078.2 482.2Q1078.2 486.2 1074.2 486.2L1038.1 486.2Q1034.1 486.2 1034.1 490.2L1034.1 504.5Q1034.1 508.5 1038.1 508.5L1057.5 508.5" fill="none" stroke="#000" stroke-width="1.2"/>
<path d="M1049.5 504.5V512.5L1057.5 508.5Z" fill="#000"/>
<path d="M1088.6 508.5L1104.5 508.5Q1108.5 508.5 1108.5 512.5L1108.5 538.5" fill="none" stroke="#000" stroke-width="1.2"/>
<path d="M1104.5 530.5H1112.5L1108.5 538.5Z" fill="#000"/>
<path d="M1148.4 554.4L1164.0 554.4Q1168 554.4 1168.0 558.4L1168 583.5" fill="none" stroke="#000" stroke-width="1.2"/>
<path d="M1164 575.5H1172L1168 583.5Z" fill="#000"/>
<path d="M1267.6 599.5L1283.0 599.5Q1287 599.5 1287.0 603.5L1287 629" fill="none" stroke="#000" stroke-width="1.2"/>
<path d="M1283 621H1291L1287 629Z" fill="#000"/>
<path d="M1578 321.5L1593.4 321.5Q1597.4 321.5 1597.4 325.5L1597.4 663.0Q1597.4 667 1593.4 667.0L1530.2 667.0Q1526.2 667 1526.2 671.0L1526.2 685.6Q1526.2 689.6 1530.2 689.6L1551 689.6" fill="none" stroke="#000" stroke-width="1.2"/>
<path d="M1543 685.6V693.6L1551 689.6Z" fill="#000"/>
<path d="M1581.5 689.6L1598.0 689.6Q1602 689.6 1602.0 693.6L1602.0 708.0Q1602 712 1598.0 712.0L1535.7 712.0Q1531.7 712 1531.7 716.0L1531.7 725.5Q1531.7 729.5 1535.7 729.5L1555.5 729.5" fill="none" stroke="#000" stroke-width="1.2"/>
<path d="M1547.5 725.5V733.5L1555.5 729.5Z" fill="#000"/>
<path d="M1681.5 729.5L1696.8 729.5Q1700.8 729.5 1700.8 733.5L1700.8 919.8Q1700.8 923.8 1696.8 923.8L1635.6 923.8Q1631.6 923.8 1631.6 927.8L1631.6 942.3Q1631.6 946.3 1635.6 946.3L1655.5 946.3" fill="none" stroke="#000" stroke-width="1.2"/>
<path d="M1647.5 942.3V950.3L1655.5 946.3Z" fill="#000"/>
<path d="M1626.7 795.3L1642.0 795.3Q1646 795.3 1646.0 799.3L1646.0 828.6Q1646 832.6 1642.0 832.6L1605.6 832.6Q1601.6 832.6 1601.6 836.6L1601.6 852.8Q1601.6 856.8 1605.6 856.8L1626 856.8" fill="none" stroke="#000" stroke-width="1.2"/>
<path d="M1618 852.8V860.8L1626 856.8Z" fill="#000"/>
<path d="M1656.4 856.5L1672.0 856.5Q1676 856.5 1676.0 860.5L1676.0 873.7Q1676 877.7 1672.0 877.7L1635.6 877.7Q1631.6 877.7 1631.6 881.7L1631.6 897.2Q1631.6 901.2 1635.6 901.2L1655.8 901.2" fill="none" stroke="#000" stroke-width="1.2"/>
<path d="M1647.8 897.2V905.2L1655.8 901.2Z" fill="#000"/>
<text x="824.7" y="380.8" font-size="21.6" fill="#000" font-weight="normal" text-anchor="start" >Cliente</text>
<text x="915.2" y="426.1" font-size="21.6" fill="#000" font-weight="normal" text-anchor="start" >Diseñador; Programador</text>
<text x="1092.9" y="471.4" font-size="21.6" fill="#000" font-weight="normal" text-anchor="start" >Director de producto; Cliente</text>
<text x="1124.6" y="516.6" font-size="21.6" fill="#000" font-weight="normal" text-anchor="start" >Director de producto; Cliente</text>
<text x="1184.0" y="561.9" font-size="21.6" fill="#000" font-weight="normal" text-anchor="start" >Diseñador; Director de producto</text>
<text x="1304.2" y="607.2" font-size="21.6" fill="#000" font-weight="normal" text-anchor="start" >Director de producto</text>
<text x="1611.6" y="652.5" font-size="21.6" fill="#000" font-weight="normal" text-anchor="start" >Programador</text>
<text x="1616.4" y="697.8" font-size="21.6" fill="#000" font-weight="normal" text-anchor="start" >Director de proyecto</text>
<text x="1661.2" y="803.8" font-size="21.6" fill="#000" font-weight="normal" text-anchor="start" >Director de producto</text>
<text x="1691.5" y="864.4" font-size="21.6" fill="#000" font-weight="normal" text-anchor="start" >Director de proyecto</text>
<text x="1716.0" y="909.7" font-size="21.6" fill="#000" font-weight="normal" text-anchor="start" >Cliente; Director de proyecto</text>
<text x="1701.8" y="955.0" font-size="21.6" fill="#000" font-weight="normal" text-anchor="start" >Director de proyecto</text>
<text x="863.8" y="471.4" font-size="21.6" fill="#000" font-weight="normal" text-anchor="end" >Pruebas beta</text>
<text x="1018.7" y="516.6" font-size="21.6" fill="#000" font-weight="normal" text-anchor="end" >Pruebas de usabilidad</text>
<text x="1073.7" y="561.9" font-size="21.6" fill="#000" font-weight="normal" text-anchor="end" >Crear guía de estilo</text>
<text x="1134.0" y="607.2" font-size="21.6" fill="#000" font-weight="normal" text-anchor="end" >Pruebas de navegador</text>
<text x="1253.2" y="652.5" font-size="21.6" fill="#000" font-weight="normal" text-anchor="end" >Corregir fallos</text>
<text x="1512.9" y="697.8" font-size="21.6" fill="#000" font-weight="normal" text-anchor="end" >Producción finalizada</text>
<text x="1552.2" y="803.8" font-size="21.6" fill="#000" font-weight="normal" text-anchor="end" >Definir calendario de mantenimiento</text>
<text x="1587.7" y="864.4" font-size="21.6" fill="#000" font-weight="normal" text-anchor="end" >Retrospectiva del proyecto</text>
<text x="1617.6" y="909.7" font-size="21.6" fill="#000" font-weight="normal" text-anchor="end" >Presentaciones finales</text>
<text x="1617.6" y="955.0" font-size="21.6" fill="#000" font-weight="normal" text-anchor="end" >Postproducción finalizada</text>
<text x="1516.5" y="743.1" font-size="21.6" fill="#c2c2c2" font-weight="normal" text-anchor="end" >Postproducción</text>
</g>
<rect x="1904.5" y="184.5" width="577.5" height="1320.5" rx="9" fill="#3c3c3c" stroke="#2c2c2c" stroke-width="1"/>
<path d="M1905 1464.5H2481.5V1496Q2481.5 1505 2472.5 1505H1914Q1905 1505 1905 1496Z" fill="#474747"/>
<path d="M1905 1464.5H2481.5" stroke="#242424" stroke-width="1.6"/>
<path d="M1905 1495Q1905 1505 1915 1505H2472Q2482 1505 2482 1495" fill="none" stroke="#2a2a2a" stroke-width="1"/>
<text x="1920.5" y="212.8" font-size="22" fill="#d2d2d2" font-weight="bold" text-anchor="start" letter-spacing="0.5">Incluido</text>
<rect x="1921.3" y="232.4" width="23.4" height="23.4" rx="4" fill="none" stroke="#ededed" stroke-width="2.2"/>
<text x="1962.0" y="253.2" font-size="22" fill="#ececec" font-weight="normal" text-anchor="start" letter-spacing="0.62" stroke="#ececec" stroke-width="0.4">A tiempo</text>
<rect x="1921.3" y="272.4" width="23.4" height="23.4" rx="4" fill="none" stroke="#ededed" stroke-width="2.2"/>
<text x="1962.0" y="293.2" font-size="22" fill="#ececec" font-weight="normal" text-anchor="start" letter-spacing="0.62" stroke="#ececec" stroke-width="0.4">Actividad raíz</text>
<rect x="1921.3" y="312.4" width="23.4" height="23.4" rx="4" fill="none" stroke="#ededed" stroke-width="2.2"/>
<text x="1962.0" y="333.2" font-size="22" fill="#ececec" font-weight="normal" text-anchor="start" letter-spacing="0.62" stroke="#ececec" stroke-width="0.4">Actividades</text>
<rect x="1921.3" y="352.4" width="23.4" height="23.4" rx="4" fill="none" stroke="#ededed" stroke-width="2.2"/>
<text x="1962.0" y="373.2" font-size="22" fill="#ececec" font-weight="normal" text-anchor="start" letter-spacing="0.62" stroke="#ececec" stroke-width="0.4">Con adjuntos</text>
<rect x="1921.3" y="392.4" width="23.4" height="23.4" rx="4" fill="none" stroke="#ededed" stroke-width="2.2"/>
<text x="1962.0" y="413.2" font-size="22" fill="#ececec" font-weight="normal" text-anchor="start" letter-spacing="0.62" stroke="#ececec" stroke-width="0.4">Con recurso</text>
<rect x="1921.3" y="432.4" width="23.4" height="23.4" rx="4" fill="none" stroke="#ededed" stroke-width="2.2"/>
<text x="1962.0" y="453.2" font-size="22" fill="#ececec" font-weight="normal" text-anchor="start" letter-spacing="0.62" stroke="#ececec" stroke-width="0.4">Coste superior al presupuesto</text>
<rect x="1921.3" y="472.4" width="23.4" height="23.4" rx="4" fill="none" stroke="#ededed" stroke-width="2.2"/>
<text x="1962.0" y="493.2" font-size="22" fill="#ececec" font-weight="normal" text-anchor="start" letter-spacing="0.62" stroke="#ececec" stroke-width="0.4">En curso</text>
<rect x="1921.3" y="512.4" width="23.4" height="23.4" rx="4" fill="none" stroke="#ededed" stroke-width="2.2"/>
<text x="1962.0" y="533.2" font-size="22" fill="#ececec" font-weight="normal" text-anchor="start" letter-spacing="0.62" stroke="#ececec" stroke-width="0.4">Esta semana</text>
<rect x="1921.3" y="552.4" width="23.4" height="23.4" rx="4" fill="none" stroke="#ededed" stroke-width="2.2"/>
<text x="1962.0" y="573.2" font-size="22" fill="#ececec" font-weight="normal" text-anchor="start" letter-spacing="0.62" stroke="#ececec" stroke-width="0.4">Este mes</text>
<rect x="1921.3" y="592.4" width="23.4" height="23.4" rx="4" fill="none" stroke="#ededed" stroke-width="2.2"/>
<text x="1962.0" y="613.2" font-size="22" fill="#ececec" font-weight="normal" text-anchor="start" letter-spacing="0.62" stroke="#ececec" stroke-width="0.4">Futura</text>
<rect x="1921.3" y="632.4" width="23.4" height="23.4" rx="4" fill="none" stroke="#ededed" stroke-width="2.2"/>
<text x="1962.0" y="653.2" font-size="22" fill="#ececec" font-weight="normal" text-anchor="start" letter-spacing="0.62" stroke="#ececec" stroke-width="0.4">Grupos</text>
<rect x="1921.3" y="672.4" width="23.4" height="23.4" rx="4" fill="none" stroke="#ededed" stroke-width="2.2"/>
<text x="1962.0" y="693.2" font-size="22" fill="#ececec" font-weight="normal" text-anchor="start" letter-spacing="0.62" stroke="#ececec" stroke-width="0.4">Grupos del nivel superior</text>
<rect x="1921.3" y="712.4" width="23.4" height="23.4" rx="4" fill="none" stroke="#ededed" stroke-width="2.2"/>
<text x="1962.0" y="733.2" font-size="22" fill="#ececec" font-weight="normal" text-anchor="start" letter-spacing="0.62" stroke="#ececec" stroke-width="0.4">Hitos</text>
<rect x="1921.3" y="752.4" width="23.4" height="23.4" rx="4" fill="none" stroke="#ededed" stroke-width="2.2"/>
<text x="1962.0" y="773.2" font-size="22" fill="#ececec" font-weight="normal" text-anchor="start" letter-spacing="0.62" stroke="#ececec" stroke-width="0.4">Hitos finalizados</text>
<rect x="1921.3" y="792.4" width="23.4" height="23.4" rx="4" fill="none" stroke="#ededed" stroke-width="2.2"/>
<text x="1962.0" y="813.2" font-size="22" fill="#ececec" font-weight="normal" text-anchor="start" letter-spacing="0.62" stroke="#ececec" stroke-width="0.4">Hitos retrasados</text>
<rect x="1921.3" y="832.4" width="23.4" height="23.4" rx="4" fill="none" stroke="#ededed" stroke-width="2.2"/>
<text x="1962.0" y="853.2" font-size="22" fill="#ececec" font-weight="normal" text-anchor="start" letter-spacing="0.62" stroke="#ececec" stroke-width="0.4">Hoy</text>
<rect x="1921.3" y="872.4" width="23.4" height="23.4" rx="4" fill="none" stroke="#ededed" stroke-width="2.2"/>
<text x="1962.0" y="893.2" font-size="22" fill="#ececec" font-weight="normal" text-anchor="start" letter-spacing="0.62" stroke="#ececec" stroke-width="0.4">Incompleto</text>
<rect x="1921.3" y="912.4" width="23.4" height="23.4" rx="4" fill="none" stroke="#ededed" stroke-width="2.2"/>
<text x="1962.0" y="933.2" font-size="22" fill="#ececec" font-weight="normal" text-anchor="start" letter-spacing="0.62" stroke="#ececec" stroke-width="0.4">Iniciadas</text>
<rect x="1921.3" y="952.4" width="23.4" height="23.4" rx="4" fill="none" stroke="#ededed" stroke-width="2.2"/>
<text x="1962.0" y="973.2" font-size="22" fill="#ececec" font-weight="normal" text-anchor="start" letter-spacing="0.62" stroke="#ececec" stroke-width="0.4">Intervalo de actividad</text>
<rect x="1921.3" y="992.4" width="23.4" height="23.4" rx="4" fill="none" stroke="#ededed" stroke-width="2.2"/>
<text x="1962.0" y="1013.2" font-size="22" fill="#ececec" font-weight="normal" text-anchor="start" letter-spacing="0.62" stroke="#ececec" stroke-width="0.4">Ligeramente retrasada</text>
<rect x="1921.3" y="1032.4" width="23.4" height="23.4" rx="4" fill="none" stroke="#ededed" stroke-width="2.2"/>
<text x="1962.0" y="1053.2" font-size="22" fill="#ececec" font-weight="normal" text-anchor="start" letter-spacing="0.62" stroke="#ececec" stroke-width="0.4">Mañana</text>
<rect x="1921.3" y="1072.4" width="23.4" height="23.4" rx="4" fill="none" stroke="#ededed" stroke-width="2.2"/>
<text x="1962.0" y="1093.2" font-size="22" fill="#ececec" font-weight="normal" text-anchor="start" letter-spacing="0.62" stroke="#ececec" stroke-width="0.4">Mes siguiente</text>
<path d="M1925.6 1084.3999999999999L1931.3 1090.8999999999999L1940.7 1077.3999999999999" fill="none" stroke="#ededed" stroke-width="3.2" stroke-linecap="round" stroke-linejoin="round"/>
<rect x="1921.3" y="1112.4" width="23.4" height="23.4" rx="4" fill="none" stroke="#ededed" stroke-width="2.2"/>
<text x="1962.0" y="1133.2" font-size="22" fill="#ececec" font-weight="normal" text-anchor="start" letter-spacing="0.62" stroke="#ececec" stroke-width="0.4">Nivel superior</text>
<rect x="1921.3" y="1152.4" width="23.4" height="23.4" rx="4" fill="none" stroke="#ededed" stroke-width="2.2"/>
<text x="1962.0" y="1173.2" font-size="22" fill="#ececec" font-weight="normal" text-anchor="start" letter-spacing="0.62" stroke="#ececec" stroke-width="0.4">Nivel superior sin hitos</text>
<rect x="1921.3" y="1192.4" width="23.4" height="23.4" rx="4" fill="none" stroke="#ededed" stroke-width="2.2"/>
<text x="1962.0" y="1213.2" font-size="22" fill="#ececec" font-weight="normal" text-anchor="start" letter-spacing="0.62" stroke="#ececec" stroke-width="0.4">Realizado</text>
<rect x="1921.3" y="1232.4" width="23.4" height="23.4" rx="4" fill="none" stroke="#ededed" stroke-width="2.2"/>
<text x="1962.0" y="1253.2" font-size="22" fill="#ececec" font-weight="normal" text-anchor="start" letter-spacing="0.62" stroke="#ececec" stroke-width="0.4">Retrasada</text>
<rect x="1921.3" y="1272.4" width="23.4" height="23.4" rx="4" fill="none" stroke="#ededed" stroke-width="2.2"/>
<text x="1962.0" y="1293.2" font-size="22" fill="#ececec" font-weight="normal" text-anchor="start" letter-spacing="0.62" stroke="#ececec" stroke-width="0.4">Semana siguiente</text>
<rect x="1921.3" y="1312.4" width="23.4" height="23.4" rx="4" fill="none" stroke="#ededed" stroke-width="2.2"/>
<text x="1962.0" y="1333.2" font-size="22" fill="#ececec" font-weight="normal" text-anchor="start" letter-spacing="0.62" stroke="#ececec" stroke-width="0.4">Sin iniciar</text>
<rect x="1921.3" y="1352.4" width="23.4" height="23.4" rx="4" fill="none" stroke="#ededed" stroke-width="2.2"/>
<text x="1962.0" y="1373.2" font-size="22" fill="#ececec" font-weight="normal" text-anchor="start" letter-spacing="0.62" stroke="#ececec" stroke-width="0.4">Sobre la ruta crítica</text>
<rect x="1921.3" y="1392.4" width="23.4" height="23.4" rx="4" fill="none" stroke="#ededed" stroke-width="2.2"/>
<text x="1962.0" y="1413.2" font-size="22" fill="#ececec" font-weight="normal" text-anchor="start" letter-spacing="0.62" stroke="#ececec" stroke-width="0.4">Tareas personales</text>
<rect x="1921.3" y="1432.4" width="23.4" height="23.4" rx="4" fill="none" stroke="#ededed" stroke-width="2.2"/>
<text x="1962.0" y="1453.2" font-size="22" fill="#ececec" font-weight="normal" text-anchor="start" letter-spacing="0.62" stroke="#ececec" stroke-width="0.4">Tareas personales de esta semana</text>
<path d="M1927 1485H1949M1938 1474V1496" stroke="#f2f2f2" stroke-width="2.2"/>
<path d="M2015.5 1486.3A9.6 9.6 0 1 1 2006 1476.7" fill="none" stroke="#a6a6a6" stroke-width="2"/>
<path d="M2006 1470L2013.5 1476.5L2006 1482.5Z" fill="#a6a6a6"/>
<rect x="2436.10" y="1473.00" width="4.60" height="24.40" fill="#a2a2a2" transform="rotate(0 2438.4 1485.2)"/>
<rect x="2436.10" y="1473.00" width="4.60" height="24.40" fill="#a2a2a2" transform="rotate(45 2438.4 1485.2)"/>
<rect x="2436.10" y="1473.00" width="4.60" height="24.40" fill="#a2a2a2" transform="rotate(90 2438.4 1485.2)"/>
<rect x="2436.10" y="1473.00" width="4.60" height="24.40" fill="#a2a2a2" transform="rotate(135 2438.4 1485.2)"/>
<circle cx="2438.4" cy="1485.2" r="8.5" fill="#a2a2a2"/>
<circle cx="2438.4" cy="1485.2" r="3.3" fill="#474747"/>
<path d="M2453.5 1489L2458.5 1494.5L2464 1489" fill="none" stroke="#a2a2a2" stroke-width="1.5"/>
<ellipse cx="1512" cy="147.6" rx="134.6" ry="45.2" fill="none" stroke="#d8462c" stroke-width="3.3"/>
<circle cx="1931.7" cy="1084.6" r="26.4" fill="none" stroke="#d8462c" stroke-width="2.8"/>
</svg>
</body></html>
